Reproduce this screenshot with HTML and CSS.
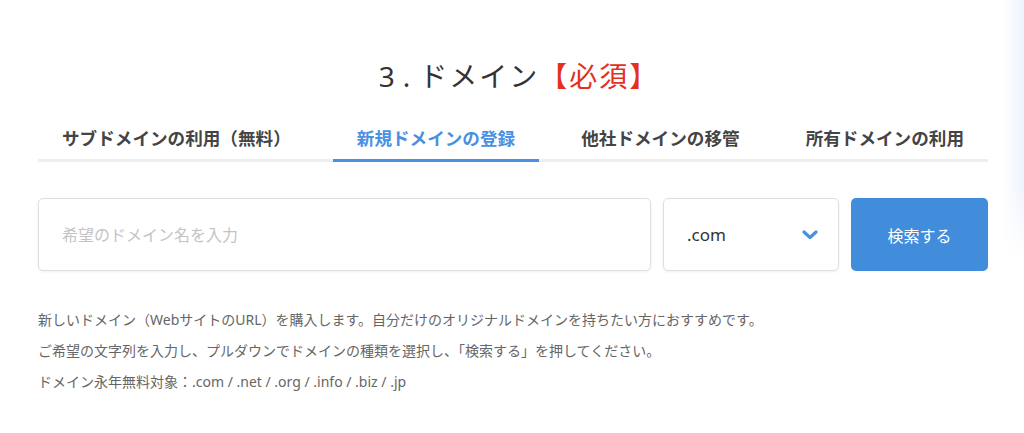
FILE: index.html
```html
<!DOCTYPE html>
<html lang="ja">
<head>
  <meta charset="UTF-8">
  <title>ドメイン</title>
  <meta name="viewport" content="width=device-width, initial-scale=1">
  <link rel="stylesheet" href="styles.css">
</head>
<body>
  <div class="page">
    <section class="domain">
      <h2 class="domain__title">3<span class="domain__dot">.</span>ドメイン<span class="required">【必須】</span></h2>
      <ul class="tabs">
        <li class="tabs__item">サブドメインの利用（無料）</li>
        <li class="tabs__item tabs__item--active">新規ドメインの登録</li>
        <li class="tabs__item">他社ドメインの移管</li>
        <li class="tabs__item">所有ドメインの利用</li>
      </ul>
      <form class="search">
        <input type="text" class="search__input" placeholder="希望のドメイン名を入力">
        <div class="search__select">
          <span>.com</span>
          <svg width="16" height="10" viewBox="0 0 16 10"><polyline points="2,2 8,7.5 14,2" fill="none" stroke="#4a90e2" stroke-width="3.2" stroke-linecap="round" stroke-linejoin="round"/></svg>
        </div>
        <button type="button" class="search__button">検索する</button>
      </form>
      <div class="notes">
        <p>新しいドメイン（WebサイトのURL）を購入します。自分だけのオリジナルドメインを持ちたい方におすすめです。</p>
        <p>ご希望の文字列を入力し、プルダウンでドメインの種類を選択し、「検索する」を押してください。</p>
        <p>ドメイン永年無料対象：.com / .net / .org / .info / .biz / .jp</p>
      </div>
    </section>
    <div class="edge-shadow"></div>
  </div>
</body>
</html>
```

FILE: styles.css
```css
body {
  margin: 0;
  background-color: #fff;
  font-family: "Noto Sans", "Noto Sans CJK JP", sans-serif;
  color: #333;
}
.page {
  position: relative;
  height: 433px;
  overflow: hidden;
}
.domain {
  width: 950px;
  margin-left: 38px;
  padding-top: 56px;
}
.domain__title {
  margin: 0;
  padding-left: 12px;
  font-size: 28px;
  line-height: 40px;
  font-weight: normal;
  text-align: center;
  color: #333;
  letter-spacing: 2px;
}
.domain__dot {
  margin: 0 7px 0 6px;
}
.required {
  color: #e2311f;
}
.tabs {
  display: flex;
  justify-content: space-between;
  list-style: none;
  margin: 18px 0 0;
  padding: 0;
  border-bottom: 3px solid #eeeeee;
}
.tabs__item {
  padding: 12px 24px 9px;
  margin-bottom: -3px;
  font-size: 17.6px;
  line-height: 24px;
  font-weight: bold;
  color: #444;
  border-bottom: 3px solid transparent;
}
.tabs__item--active {
  color: #4a90e2;
  border-bottom-color: #4a90e2;
}
.search {
  display: flex;
  gap: 12px;
  margin-top: 36px;
  height: 73px;
}
.search__input {
  flex: 1;
  box-sizing: border-box;
  padding: 0 23px;
  border: 1px solid #dedede;
  border-radius: 5px;
  box-shadow: 0 1px 3px rgba(0, 0, 0, 0.06);
  font-family: inherit;
  font-size: 16px;
  color: #333;
  outline: none;
}
.search__input::placeholder {
  color: #c4c4c4;
}
.search__select {
  display: flex;
  align-items: center;
  justify-content: space-between;
  width: 176px;
  box-sizing: border-box;
  padding: 0 20px 0 23px;
  border: 1px solid #dedede;
  border-radius: 5px;
  box-shadow: 0 1px 3px rgba(0, 0, 0, 0.06);
  font-size: 17px;
  color: #333;
}
.search__button {
  width: 137px;
  border: none;
  border-radius: 5px;
  background-color: #428cdc;
  color: #fff;
  font-family: inherit;
  font-size: 16px;
  cursor: pointer;
}
.notes {
  margin-top: 33px;
}
.notes p {
  margin: 0;
  font-size: 14px;
  line-height: 31px;
  color: #666;
}
.edge-shadow {
  position: absolute;
  top: 0;
  right: 0;
  width: 22px;
  height: 260px;
  background: linear-gradient(to right, rgba(235, 241, 252, 0), rgba(235, 241, 252, 0.9));
  -webkit-mask-image: linear-gradient(to bottom, #000 70%, transparent);
  mask-image: linear-gradient(to bottom, #000 70%, transparent);
}
```
